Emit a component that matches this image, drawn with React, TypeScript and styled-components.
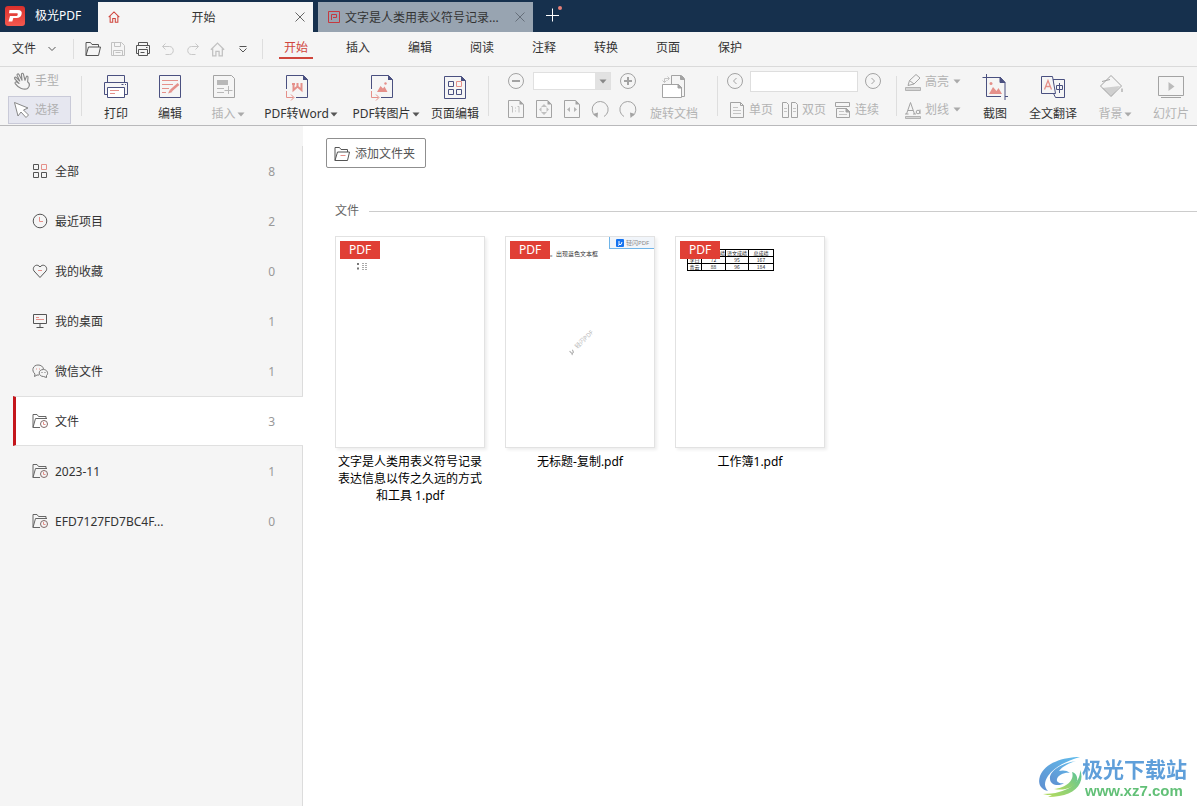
import React from "react";
import styled, { createGlobalStyle, css } from "styled-components";

const navy = "#4a5080";
const coral = "#e5908a";
const red = "#d0453c";
const mute = "#a3a3a3";
const ink = "#555";

const GlobalStyle = createGlobalStyle`
  * { box-sizing: border-box; }
  html, body { margin: 0; }
  body {
    font: 12px/16px "Noto Sans", "Noto Sans CJK SC", sans-serif;
    color: #333;
    background: #fff;
    overflow-x: hidden;
  }
  button, input { font: inherit; color: inherit; }
  button { padding: 0; border: 0; background: none; cursor: pointer; white-space: nowrap; }
  svg { display: block; flex: none; overflow: visible; }
`;

const Page = styled.div`
  min-height: 100vh;
  display: flex;
  flex-direction: column;
`;

/* ---------- title bar ---------- */

const TitleBar = styled.header`
  display: flex;
  height: 32px;
  padding-top: 2px;
  background: #16304d;
`;
const Brand = styled.div`
  width: 98px;
  padding: 0 0 3px 5px;
  display: flex;
  align-items: center;
  gap: 10px;
  color: #fff;
  flex: none;
`;
const Tab = styled.div<{ $active?: boolean }>`
  width: 215px;
  margin-right: 5px;
  padding: 0 8px 0 10px;
  display: flex;
  align-items: center;
  gap: 5px;
  background: ${(p) => (p.$active ? "#f5f5f5" : "#98a4b1")};
`;
const TabTitle = styled.span<{ $center?: boolean }>`
  flex: 1;
  padding-top: 2px;
  white-space: nowrap;
  ${(p) => p.$center && css`text-align: center; padding-right: 8px;`}
`;
const CloseButton = styled.button`
  width: 10px;
  height: 10px;
`;
const NewTab = styled.button`
  width: 30px;
  display: flex;
  justify-content: center;
  padding-top: 4px;
`;

/* ---------- menu bar ---------- */

const MenuBar = styled.div`
  display: flex;
  align-items: center;
  height: 35px;
  background: #f5f5f5;
  border-bottom: 1px solid #dadada;
`;
const FileMenu = styled.button`
  display: flex;
  align-items: center;
  gap: 12px;
  width: 73px;
  padding-left: 12px;
`;
const BarLine = styled.span<{ $tall?: boolean }>`
  width: 1px;
  height: ${(p) => (p.$tall ? 40 : 20)}px;
  background: #dedede;
  flex: none;
`;
const QuickTools = styled.div`
  display: flex;
  padding: 0 7px 0 6px;
`;
const QuickButton = styled.button`
  width: 25px;
  height: 24px;
  display: grid;
  place-items: center;
`;
const Menus = styled.nav`
  display: flex;
  gap: 28px;
  padding-left: 16px;
`;
const MenuItem = styled.button<{ $active?: boolean }>`
  width: 34px;
  height: 20px;
  line-height: 18px;
  border-bottom: 2px solid ${(p) => (p.$active ? red : "transparent")};
  color: ${(p) => (p.$active ? red : "#333")};
`;

/* ---------- ribbon ---------- */

const Ribbon = styled.div`
  display: flex;
  align-items: flex-start;
  height: 59px;
  padding-left: 8px;
  background: #f5f5f5;
  border-bottom: 1px solid #b9b9bb;
  overflow: hidden;
  & > * { flex: none; }
`;
const Divider = styled(BarLine)<{ $before: number; $after: number }>`
  margin: 9px ${(p) => p.$after}px 0 ${(p) => p.$before}px;
`;
const Stack = styled.div<{ $gap?: number }>`
  display: flex;
  flex-direction: column;
  gap: ${(p) => p.$gap ?? 0}px;
`;
const ModeButton = styled.button<{ $on?: boolean }>`
  display: flex;
  align-items: center;
  gap: 4px;
  width: 63px;
  height: 28px;
  padding-left: 4px;
  color: #b0b0b0;
  border: 1px solid transparent;
  ${(p) => p.$on && css`background: #e6e7f0; border-color: #c9cad8;`}
`;
const BigButton = styled.button<{ $width: number; $off?: boolean; $menu?: boolean }>`
  display: flex;
  flex-direction: column;
  align-items: center;
  gap: 7px;
  width: ${(p) => p.$width}px;
  padding-top: 8px;
  color: ${(p) => (p.$off ? "#b3b3b3" : "#333")};
  & > svg { margin-right: ${(p) => (p.$menu ? 8 : 0)}px; }
`;
const Label = styled.span`
  display: flex;
  align-items: center;
  gap: 1px;
`;
const Row = styled.div<{ $gap: number; $indent?: number }>`
  display: flex;
  align-items: center;
  height: 28px;
  gap: ${(p) => p.$gap}px;
  padding-left: ${(p) => p.$indent ?? 0}px;
`;
const IconButton = styled.button`
  width: 22px;
  height: 22px;
  display: grid;
  place-items: center;
`;
const Combo = styled.div`
  display: flex;
  width: 78px;
  height: 18px;
  border: 1px solid #e0e0e0;
  background: #fff;
`;
const ComboInput = styled.input`
  flex: 1;
  min-width: 0;
  border: 0;
  padding: 0 4px;
  background: #fff;
`;
const ComboArrow = styled.button`
  width: 15px;
  display: grid;
  place-items: center;
  background: #e2e2e2;
`;
const PageInput = styled.input`
  width: 108px;
  height: 21px;
  border: 1px solid #dedede;
  background: #fff;
`;
const SmallButton = styled.button`
  display: flex;
  align-items: center;
  gap: 4px;
  padding-top: 1px;
  color: #b3b3b3;
`;

/* ---------- sidebar ---------- */

const Body = styled.div`
  flex: 1;
  display: flex;
`;
const Sidebar = styled.nav`
  width: 303px;
  padding-top: 20px;
  flex: none;
  display: flex;
  flex-direction: column;
  background: #f5f5f5;
`;
const SideItem = styled.button<{ $active?: boolean }>`
  display: flex;
  align-items: center;
  gap: 7px;
  height: 50px;
  padding: 0 27px 0 32px;
  border-right: 1px solid #dcdcdc;
  text-align: left;
  & > span { padding-top: 2px; }
  ${(p) =>
    p.$active &&
    css`
      margin-left: 13px;
      padding-left: 16px;
      background: #fff;
      border: solid #e0e0e0;
      border-width: 1px 0;
      border-left: 3px solid #c4161c;
      padding-right: 28px;
    `}
`;
const SideName = styled.span`
  flex: 1;
`;
const Count = styled.span`
  color: #999;
`;
const SideRest = styled.div`
  flex: 1;
  border-right: 1px solid #dcdcdc;
`;

/* ---------- content ---------- */

const Content = styled.main`
  flex: 1;
  min-width: 0;
  padding: 12px 0 20px 23px;
`;
const AddFolder = styled.button`
  display: flex;
  align-items: center;
  gap: 5px;
  width: 100px;
  height: 30px;
  padding: 1px 0 0 7px;
  border: 1px solid #8f8f8f;
  border-radius: 2px;
  color: #555;
`;
const SectionTitle = styled.h2`
  display: flex;
  align-items: center;
  gap: 10px;
  margin: 35px 0 17px 9px;
  font-size: 12px;
  font-weight: 400;
  color: #666;
  &::after { content: ""; flex: 1; height: 1px; background: #ccc; }
`;
const Files = styled.div`
  display: flex;
  flex-wrap: wrap;
  gap: 20px;
  padding-left: 9px;
`;
const File = styled.figure`
  width: 150px;
  margin: 0;
`;
const Thumb = styled.div`
  position: relative;
  height: 212px;
  overflow: hidden;
  background: #fff;
  border: 1px solid #e2e2e2;
`;
const ThumbFrame = styled.div`
  box-shadow: 2px 2px 3px #eee;
`;
const PdfBadge = styled.span`
  position: absolute;
  top: 4px;
  left: 4px;
  width: 40px;
  height: 18px;
  line-height: 18px;
  text-align: center;
  color: #fff;
  background: #e03f35;
`;
const Caption = styled.figcaption`
  margin-top: 5px;
  line-height: 17px;
  text-align: center;
  color: #000;
`;
const Specks = styled.div`
  padding: 26px 0 0 21px;
`;
const NoteLine = styled.p`
  margin: 13px 0 0 44px;
  font: 6px/8px "Noto Sans CJK SC", sans-serif;
  color: #333;
  white-space: nowrap;
`;
const MakerTag = styled.span`
  position: absolute;
  top: 0;
  right: 0;
  display: flex;
  align-items: center;
  gap: 2px;
  width: 45px;
  height: 12px;
  padding-left: 6px;
  font-size: 6px;
  color: #888;
  background: #f1f5fa;
  border: solid #6fb4e8;
  border-width: 0 0 1px 1px;
`;
const DiagonalMark = styled.span`
  position: absolute;
  top: 98px;
  left: 58px;
  display: flex;
  align-items: center;
  gap: 2px;
  font-size: 6px;
  color: #b5b5b5;
  white-space: nowrap;
  transform: rotate(-45deg);
`;
const Scores = styled.table`
  margin: 12px 0 0 11px;
  width: 86px;
  table-layout: fixed;
  border-collapse: collapse;
  font: 5px/6px "Noto Sans CJK SC", sans-serif;
  text-align: center;
  color: #222;
  td, th { padding: 0; border: 1px solid #000; font-weight: 400; white-space: nowrap; overflow: hidden; height: 7px; }
  th:nth-child(2) { text-align: right; }
`;

/* ---------- site mark ---------- */

const SiteMark = styled.div`
  position: fixed;
  right: 10px;
  bottom: 6px;
  display: flex;
  align-items: center;
`;
const SiteText = styled.div`
  display: flex;
  flex-direction: column;
  gap: 1px;
`;
const SiteName = styled.span`
  font: 700 21px/26px "Noto Sans CJK SC", sans-serif;
  color: #5f9fda;
`;
const SiteUrl = styled.span`
  font: 700 15px/18px "Liberation Sans", sans-serif;
  padding-left: 3px;
  color: #62c077;
`;

/* ---------- icons ---------- */

type IconProps = { s?: number; c?: string; children?: React.ReactNode };
const Icon = ({ s = 16, c = ink, children }: IconProps) => (
  <svg width={s} height={s} viewBox={`0 0 ${s} ${s}`} fill="none" stroke={c} aria-hidden="true">
    {children}
  </svg>
);

const Caret = ({ c = "#555" }: { c?: string }) => (
  <svg width="8" height="5" viewBox="0 0 8 5" fill={c} aria-hidden="true">
    <path d="M0.5 0.5h7L4 4.5z" />
  </svg>
);

const Logo = () => (
  <svg width="20" height="20" viewBox="0 0 20 20" aria-hidden="true">
    <defs>
      <linearGradient id="brand" x1="0" y1="0" x2="0" y2="1">
        <stop offset="0" stopColor="#d8302c" />
        <stop offset="1" stopColor="#f4594f" />
      </linearGradient>
    </defs>
    <rect width="20" height="20" rx="3" fill="url(#brand)" />
    <path
      d="M4.500 4h8.500c3 0 4.300 1.800 3.600 4.300-.6 2.500-2.300 3.700-5 3.700H8.300l-1 3.500H3.500L5 10h6c1 0 1.500-.5 1.700-1.300.2-.9-.2-1.400-1-1.400H4z"
      fill="#fff"
    />
  </svg>
);

const Close = ({ c }: { c: string }) => (
  <Icon s={10} c={c}><path d="M0.500 0.500l9 9M9.500 0.500l-9 9" /></Icon>
);

const HomeIcon = ({ s, c }: { s: number; c: string }) => (
  <svg width={s} height={s} viewBox="0 0 14 14" fill="none" stroke={c} strokeWidth="1.200" aria-hidden="true">
    <path d="M0.800 7.200L7 1l6.200 6.200M2.500 6v7h3V8.800h3V13h3V6" />
  </svg>
);

const FolderOpen = ({ c = ink, line }: { c?: string; line?: string }) => (
  <Icon c={c}>
    <path d="M1 14.500V1.500h4.500l1.500 2h6.500v2.500M1 14.500L3.500 6H15.500l-2 8.500z" />
    {line && <path d="M6.500 9.500h5" stroke={line} />}
  </Icon>
);

const FolderClock = () => (
  <Icon c="#666">
    <path d="M1 14.500V1.500h4l1.500 2h7.500v2M8 14.500H1L3.500 5.500H15" />
    <circle cx="12" cy="11" r="3.500" stroke="#806868" />
    <path d="M11.500 9v2.500h2" stroke={coral} />
  </Icon>
);

const PrintBig = () => (
  <Icon s={24} c={navy}>
    <path d="M3.500 7.500v-7h17v7" />
    <path d="M3.500 19.500h-3v-12h23v12h-3" />
    <path d="M3.500 12.500h17v10h-17z" fill="#fff" />
    <path d="M17.500 9.500h2M21 9.500h1" />
    <path d="M6 15.500h9M6 18.500h5" stroke={coral} />
  </Icon>
);
const EditBig = () => (
  <Icon s={24} c={navy}>
    <path d="M1.500 0.500h21v22h-21z" />
    <path d="M4 5.500h16M4 9.500h11M4 13.500h7M4 17.500h4" stroke={coral} />
    <path d="M20.500 9L13 15.500" stroke={coral} strokeWidth="2.500" />
    <path d="M12 14.500l-2 4 4.500-1.500z" fill={coral} stroke="none" />
  </Icon>
);
const InsertBig = () => (
  <Icon s={24} c={mute}>
    <path d="M1.500 0.500h18l3 3v19h-21z" />
    <path d="M5 5h11v5H5z" fill="#b8b8b8" stroke="none" />
    <path d="M5 13.500h7M5 17.500h7M16.500 11v8M12.500 15.500h8" stroke="#b8b8b8" />
  </Icon>
);
const ConvertBig = ({ kind }: { kind: "word" | "image" }) => (
  <Icon s={24} c={navy}>
    <path d="M1.500 14V0.500h17l4 4v18H11" />
    <path d="M18 0v5h5z" fill={navy} stroke="none" />
    <path d="M1.500 16v6.500h7M6 19.500l3 3-3 3" stroke={coral} />
    {kind === "word" ? (
      <path d="M8.500 8v7l4-3.500 4 3.500V8M12.500 8v3M7 9h3" stroke={coral} strokeWidth="2" />
    ) : (
      <g fill={coral} stroke="none">
        <path d="M7 17l3.500-6 2.500 2.500 1.500-2 3 5.500z" />
        <circle cx="15.500" cy="8.500" r="1.200" />
      </g>
    )}
  </Icon>
);
const PageEditBig = () => (
  <Icon s={24} c={navy}>
    <path d="M1.500 1.500h17l4 4v18h-21z" />
    <path d="M18 1v5h5z" fill={navy} stroke="none" />
    <path d="M5.500 6.500h5v5h-5zM5.500 14.500h5v5h-5zM13.500 14.500h5v5h-5z" />
    <path d="M13.500 6.500h5v5h-5z" stroke={coral} />
  </Icon>
);
const RotateDocs = () => (
  <Icon s={24} c={mute}>
    <path d="M9.500 9.500v-9h10l3 3v18h-3" />
    <path d="M18.500 0.500v4h4z" fill={mute} />
    <path d="M0.500 9.500h16l3 3v10h-19z" fill="#fff" />
    <path d="M16 9.500v3.500h4z" fill={mute} />
    <path d="M2.500 7.500v-4H7M5.500 1.500l2 2-2 2M0.500 5.500l2 2 2-2" stroke="#c4c4c4" />
  </Icon>
);
const CropBig = () => (
  <Icon s={24} c={navy}>
    <path d="M3.500-1v22.500H18M-0.500 2.500h17.500l5 5V25M22 21.500h3" />
    <path d="M17 2v5.500h5z" fill={navy} />
    <path d="M6 19l4-7 3.500 4 2-3 3.500 6z" fill={coral} stroke="none" />
    <circle cx="8" cy="8.500" r="1.500" fill={coral} stroke="none" />
  </Icon>
);
const TranslateBig = () => (
  <Icon s={24} c={navy}>
    <path d="M12 4.500h11.500v18h-9l-2-4z" />
    <path d="M0.500 1.500h11l3 17h-14z" fill="#f5f5f5" />
    <path d="M3.500 14.500L7 5.500l3.500 9M5 11.500h4" stroke={coral} strokeWidth="1.300" />
    <path d="M15.500 10.500h6v4h-6zM18.500 8v10" />
  </Icon>
);
const BucketBig = () => (
  <Icon s={24} c={mute}>
    <path d="M3 13l18-2-8.500 10.500z" fill="#cfcfcf" stroke="none" />
    <path d="M12 0.500l10.500 10.500-10.500 10.500L1.500 11zM3 6.500l8-2" />
    <path d="M23 13.500v3.500" strokeWidth="2" stroke="#c4c4c4" />
  </Icon>
);
const SlidesBig = () => (
  <Icon s={24} c={mute}>
    <path d="M-0.500 1.500h25v19h-25zM2 22.500h20" />
    <path d="M9.500 7l6 4.500-6 4.500z" fill="#bbb" stroke="none" />
  </Icon>
);

const Hand = () => (
  <svg width="18" height="18" viewBox="0 0 24 24" fill="none" stroke="#888" strokeWidth="1.500" strokeLinejoin="round" strokeLinecap="round" aria-hidden="true">
    <path d="M11 22c-3-1-5.500-3-8-6.500-1-1.500.8-3 2.200-2l2.800 1.700L2.300 9c-1-1.700 1-3 2.300-1.600L9 12 5.500 4.500c-.6-1.800 1.500-2.700 2.400-1.100L12 11l-.8-7.800c0-1.800 2.200-2 2.700-.3L16 11l1.700-4.500c.7-1.600 2.700-1 2.300.8L19.500 13c2 1.500 3 3.500 2 6L19.500 22c-2.500 1.500-5.500 1-8.500 0z" />
  </svg>
);
const Arrow = () => (
  <Icon s={18} c="#888"><path d="M1.500 1.500l3.500 13.500 3-4 5 5.500 2.500-2.500-5-5 4.500-2z" fill="#fff" /></Icon>
);
const Round = ({ d, w = 1 }: { d: string; w?: number }) => (
  <Icon s={16} c={mute}><circle cx="8" cy="8" r="7.500" /><path d={d} strokeWidth={w} /></Icon>
);
const MiniSheet = ({ children }: { children: React.ReactNode }) => (
  <Icon s={18} c={mute}>
    <path d="M1.500 0.500h11l4 4v13h-15z" />
    <path d="M12.500 0v4.500H17z" fill={mute} stroke="none" />
    <g stroke="#c0c0c0">{children}</g>
  </Icon>
);
const Turn = ({ flip }: { flip?: boolean }) => (
  <Icon s={18} c={mute}>
    {flip ? (
      <>
        <path d="M5 16.500a8 8 0 1 1 8.500-.5" />
        <path d="M11 12.500l5 1.500-4.500 4z" fill={mute} stroke="none" />
      </>
    ) : (
      <>
        <path d="M13 16.500a8 8 0 1 0-8.500-.5" />
        <path d="M7 12.500L2 14l4.500 4z" fill={mute} stroke="none" />
      </>
    )}
  </Icon>
);

const Swirl = () => (
  <svg width="43" height="42" viewBox="0 0 43 42" fill="none" aria-hidden="true">
    <defs>
      <linearGradient id="swirlBlue" x1="0" y1="1" x2="1" y2="0">
        <stop offset="0" stopColor="#5f8fd0" />
        <stop offset="1" stopColor="#62bdec" />
      </linearGradient>
      <linearGradient id="swirlGreen" x1="0" y1="1" x2="1" y2="0">
        <stop offset="0" stopColor="#b9dc5a" />
        <stop offset="1" stopColor="#5cc398" />
      </linearGradient>
    </defs>
    <path d="M41 0C24 0 6 6 1 19c-3 9 2 14 8 15-4-4-4-9 0-15C16 9 28 4 41 0z" fill="url(#swirlBlue)" />
    <path d="M37 4C23 6 10 14 11 22c0 6 9 8 14 4-4 1-8-1-7-4 1-4 8-7 13-6-3-3-8-3-11-2 4-5 10-8 17-10z" fill="url(#swirlBlue)" />
    <path d="M41 13c1 13-13 24-37 24 3 1 6 1 9 1l-4 2c16 0 28-5 32-14 2-4 2-9 0-13z" fill="url(#swirlGreen)" />
    <path d="M33 15c3 8-6 16-18 17 10 2 20-1 23-8 1-4-1-8-5-9z" fill="url(#swirlGreen)" />
  </svg>
);

/* ---------- data ---------- */

const menus = ["开始", "插入", "编辑", "阅读", "注释", "转换", "页面", "保护"];

const sideItems = [
  {
    name: "全部",
    count: 8,
    icon: (
      <Icon>
        <path d="M1.500 1.500h5v5h-5zM1.500 9.500h5v5h-5zM9.500 9.500h5v5h-5z" />
        <path d="M9.500 1.500h5v5h-5z" stroke={coral} />
      </Icon>
    ),
  },
  {
    name: "最近项目",
    count: 2,
    icon: <Icon><circle cx="8" cy="8" r="6.800" /><path d="M7.500 4v4.500H11" stroke={coral} /></Icon>,
  },
  {
    name: "我的收藏",
    count: 0,
    icon: (
      <Icon>
        <path d="M8 14.500L2 8C-.5 4.500 4.500-.5 8 4c3.500-4.500 8.500.5 6 4z" />
        <path d="M6 7.500h4" stroke={coral} />
      </Icon>
    ),
  },
  {
    name: "我的桌面",
    count: 1,
    icon: (
      <Icon>
        <path d="M1.500 1.500h13v9h-13zM8 10.500v4M4.500 14.500h7" />
        <path d="M4 4.500h3M4 6.500h8" stroke={coral} />
      </Icon>
    ),
  },
  {
    name: "微信文件",
    count: 1,
    icon: (
      <Icon c="#777">
        <path d="M7 12H5l-2.500 1.500.5-2.500C-1 7.500 1 2 6 2c3 0 5 1.500 5.500 4" />
        <path d="M11.500 6.500c-6 0-5.500 7 0 7l3 1v-2c2.500-2 .5-6-3-6z" />
        <path d="M4 6h1M7 6h1" stroke={coral} />
        <path d="M9.500 9.500h1M12.500 9.500h1" />
      </Icon>
    ),
  },
  { name: "文件", count: 3, icon: <FolderClock />, active: true },
  { name: "2023-11", count: 1, icon: <FolderClock /> },
  { name: "EFD7127FD7BC4F...", count: 0, icon: <FolderClock /> },
];

const Feather = ({ c, bg }: { c: string; bg?: string }) => (
  <svg width="8" height="8" viewBox="0 0 8 8" fill="none" stroke={c} aria-hidden="true">
    {bg && <rect width="8" height="8" rx="1" fill={bg} stroke="none" />}
    <path d="M3 2v3.500h2L6 3M2 6.500l1.500-1" />
  </svg>
);

const files = [
  {
    name: "文字是人类用表义符号记录表达信息以传之久远的方式和工具 1.pdf",
    preview: (
      <Specks>
        <svg width="12" height="7" viewBox="0 0 12 7" stroke="#777" aria-hidden="true">
          <path d="M0 1h2M0 5.500h2" strokeWidth="2" />
          <path d="M5 0.500h6M5 2.500h5M5 4.500h6M5 6.500h5" strokeDasharray="2 1" stroke="#aaa" />
        </svg>
      </Specks>
    ),
  },
  {
    name: "无标题-复制.pdf",
    preview: (
      <>
        <NoteLine>。出现蓝色文本框</NoteLine>
        <MakerTag><Feather c="#fff" bg="#1573f0" />轻闪PDF</MakerTag>
        <DiagonalMark><Feather c="#aaa" />轻闪PDF</DiagonalMark>
      </>
    ),
  },
  {
    name: "工作簿1.pdf",
    preview: (
      <Scores>
        <colgroup>
          <col width="14" /><col width="24" /><col width="23" /><col width="25" />
        </colgroup>
        <thead><tr><th></th><th>绩</th><th>语文成绩</th><th>总成绩</th></tr></thead>
        <tbody>
          <tr><td>李白</td><td>72</td><td>95</td><td>167</td></tr>
          <tr><td>青云</td><td>88</td><td>96</td><td>184</td></tr>
        </tbody>
      </Scores>
    ),
  },
];

export default function App() {
  return (
    <Page>
      <GlobalStyle />
      <TitleBar>
        <Brand><Logo />极光PDF</Brand>
        <Tab $active>
          <HomeIcon s={12} c={red} />
          <TabTitle $center>开始</TabTitle>
          <CloseButton aria-label="关闭"><Close c="#666" /></CloseButton>
        </Tab>
        <Tab>
          <Icon s={12} c="#c5393f">
            <path d="M0.500 0.500h11v11h-11z" />
            <path d="M3.500 9V3.500h5v3H5" />
          </Icon>
          <TabTitle>文字是人类用表义符号记录...</TabTitle>
          <CloseButton aria-label="关闭"><Close c="#666f7a" /></CloseButton>
        </Tab>
        <NewTab aria-label="新建标签">
          <Icon s={18} c="#fff">
            <path d="M8.500 2.500v13M2 9.500h13" />
            <circle cx="16" cy="2" r="2" fill="#e58078" stroke="none" />
          </Icon>
        </NewTab>
      </TitleBar>

      <MenuBar>
        <FileMenu>文件<Icon s={8}><path d="M0.500 2l3.500 3.500L7.500 2" /></Icon></FileMenu>
        <BarLine />
        <QuickTools>
          <QuickButton aria-label="打开"><FolderOpen /></QuickButton>
          <QuickButton aria-label="保存">
            <Icon c="#c2c2c2"><path d="M1.500 1.500h10l3 3v10h-13zM4.500 1.500v4h6v-4M3.500 14.500v-5h9v5M5.500 11.500h5" /></Icon>
          </QuickButton>
          <QuickButton aria-label="打印">
            <Icon><path d="M3.500 4.500v-3h9v3M3.500 12.500h-2v-8h13v8h-2M3.500 8.500h9v6h-9zM5.500 11.500h4M11 6.500h1.500" /></Icon>
          </QuickButton>
          <QuickButton aria-label="撤销">
            <Icon c="#c8c8c8"><path d="M5.500 2.500l-3 3 3 3M2.500 5.500h7c5 0 5 8 0 8h-4" /></Icon>
          </QuickButton>
          <QuickButton aria-label="重做">
            <Icon c="#c8c8c8"><path d="M10.500 2.500l3 3-3 3M13.500 5.500h-7c-5 0-5 8 0 8h4" /></Icon>
          </QuickButton>
          <QuickButton aria-label="主页"><HomeIcon s={15} c="#c2c2c2" /></QuickButton>
          <QuickButton aria-label="更多">
            <Icon s={8}><path d="M0.500 1.500h7M0.500 3.500L4 7l3.500-3.500" /></Icon>
          </QuickButton>
        </QuickTools>
        <BarLine />
        <Menus>
          {menus.map((m, i) => <MenuItem key={m} $active={i === 0}>{m}</MenuItem>)}
        </Menus>
      </MenuBar>

      <Ribbon>
        <Stack $gap={1}>
          <ModeButton><Hand />手型</ModeButton>
          <ModeButton $on><Arrow />选择</ModeButton>
        </Stack>
        <Divider $tall $before={10} $after={7} />
        <BigButton $width={54}><PrintBig /><Label>打印</Label></BigButton>
        <BigButton $width={54}><EditBig /><Label>编辑</Label></BigButton>
        <BigButton $width={62} $off $menu><InsertBig /><Label>插入<Caret c="#aaa" /></Label></BigButton>
        <BigButton $width={84} $menu><ConvertBig kind="word" /><Label>PDF转Word<Caret /></Label></BigButton>
        <BigButton $width={86} $menu><ConvertBig kind="image" /><Label>PDF转图片<Caret /></Label></BigButton>
        <BigButton $width={52}><PageEditBig /><Label>页面编辑</Label></BigButton>
        <Divider $tall $before={7} $after={16} />
        <Stack>
          <Row $gap={6}>
            <IconButton aria-label="缩小"><Round d="M4 8h8" w={2} /></IconButton>
            <Combo>
              <ComboInput aria-label="缩放比例" />
              <ComboArrow aria-label="选择比例"><Caret c="#888" /></ComboArrow>
            </Combo>
            <IconButton aria-label="放大"><Round d="M4 8h8M8 4v8" w={2} /></IconButton>
          </Row>
          <Row $gap={6}>
            <IconButton aria-label="实际大小">
              <MiniSheet><path d="M4 6.500h1.500v6M10.500 6.500h1.500v6M8.500 7.500v1M8.500 10.500v1" /></MiniSheet>
            </IconButton>
            <IconButton aria-label="适合页面">
              <MiniSheet>
                <path d="M6 7l3-3 3 3zM6 12l3 3 3-3zM6.500 7L4 9.500 6.500 12zM11.500 7L14 9.500 11.500 12z" fill="#c0c0c0" stroke="none" />
              </MiniSheet>
            </IconButton>
            <IconButton aria-label="适合宽度">
              <MiniSheet><path d="M7 7L4 9.500 7 12zM11 7l3 2.500-3 2.500z" fill="#b5b5b5" stroke="none" /></MiniSheet>
            </IconButton>
            <IconButton aria-label="逆时针旋转"><Turn /></IconButton>
            <IconButton aria-label="顺时针旋转"><Turn flip /></IconButton>
          </Row>
        </Stack>
        <BigButton $width={70} $off><RotateDocs /><Label>旋转文档</Label></BigButton>
        <Divider $tall $before={8} $after={6} />
        <Stack>
          <Row $gap={4}>
            <IconButton aria-label="上一页"><Round d="M9.500 5l-3 3 3 3" /></IconButton>
            <PageInput aria-label="页码" />
            <IconButton aria-label="下一页"><Round d="M6.500 5l3 3-3 3" /></IconButton>
          </Row>
          <Row $gap={9} $indent={5}>
            <SmallButton>
              <Icon c={mute}><path d="M1.500 0.500h10l3 3v12h-13zM11.500 0.500v3h3" /><path d="M4 5.500h5M4 8.500h8M4 11.500h8" stroke="#c4c4c4" /></Icon>单页
            </SmallButton>
            <SmallButton>
              <Icon c={mute}><path d="M0.500 0.500h4l2 2v13h-6zM9.500 0.500h4l2 2v13h-6z" /><path d="M2 6.500h3M2 9.500h3M11 6.500h3M11 9.500h3" stroke="#c4c4c4" /></Icon>双页
            </SmallButton>
            <SmallButton>
              <Icon c={mute}><path d="M0.500 0.500h14v4H0.500zM1.500 15.500v-9h10l3 3v6z" /><path d="M11 6v4h4z" fill={mute} /><path d="M4 9.500h5M4 12.500h8" stroke="#c4c4c4" /></Icon>连续
            </SmallButton>
          </Row>
        </Stack>
        <Divider $tall $before={12} $after={8} />
        <Stack>
          <Row $gap={4}>
            <SmallButton>
              <Icon c={mute}>
                <path d="M3 11.500l1.500-5L11 0.500l4 3.500L9 10zM4.500 6.500L9 10" />
                <path d="M0.500 13.500h15v3h-15z" fill="#d4d4d4" stroke="#b3b3b3" />
              </Icon>
              高亮<Caret c="#aaa" />
            </SmallButton>
          </Row>
          <Row $gap={4}>
            <SmallButton>
              <Icon c={mute}>
                <path d="M1.500 12L5.500 0.500l4 11.500M3 8.500h5M0 12h3.500M8 12h3" />
                <circle cx="13" cy="10" r="1.800" /><path d="M15 7.500V12" />
                <path d="M0.500 14.500h15v2h-15z" fill="#d4d4d4" stroke="#b3b3b3" />
              </Icon>
              划线<Caret c="#aaa" />
            </SmallButton>
          </Row>
        </Stack>
        <BigButton $width={68}><CropBig /><Label>截图</Label></BigButton>
        <BigButton $width={48}><TranslateBig /><Label>全文翻译</Label></BigButton>
        <BigButton $width={76} $off $menu><BucketBig /><Label>背景<Caret c="#aaa" /></Label></BigButton>
        <BigButton $width={36} $off><SlidesBig /><Label>幻灯片</Label></BigButton>
      </Ribbon>

      <Body>
        <Sidebar>
          {sideItems.map((item) => (
            <SideItem key={item.name} $active={item.active}>
              {item.icon}
              <SideName>{item.name}</SideName>
              <Count>{item.count}</Count>
            </SideItem>
          ))}
          <SideRest />
        </Sidebar>
        <Content>
          <AddFolder><FolderOpen line={coral} />添加文件夹</AddFolder>
          <SectionTitle>文件</SectionTitle>
          <Files>
            {files.map((f) => (
              <File key={f.name}>
                <ThumbFrame>
                  <Thumb>
                    {f.preview}
                    <PdfBadge>PDF</PdfBadge>
                  </Thumb>
                </ThumbFrame>
                <Caption>{f.name}</Caption>
              </File>
            ))}
          </Files>
        </Content>
      </Body>

      <SiteMark>
        <Swirl />
        <SiteText>
          <SiteName>极光下载站</SiteName>
          <SiteUrl>www.xz7.com</SiteUrl>
        </SiteText>
      </SiteMark>
    </Page>
  );
}
